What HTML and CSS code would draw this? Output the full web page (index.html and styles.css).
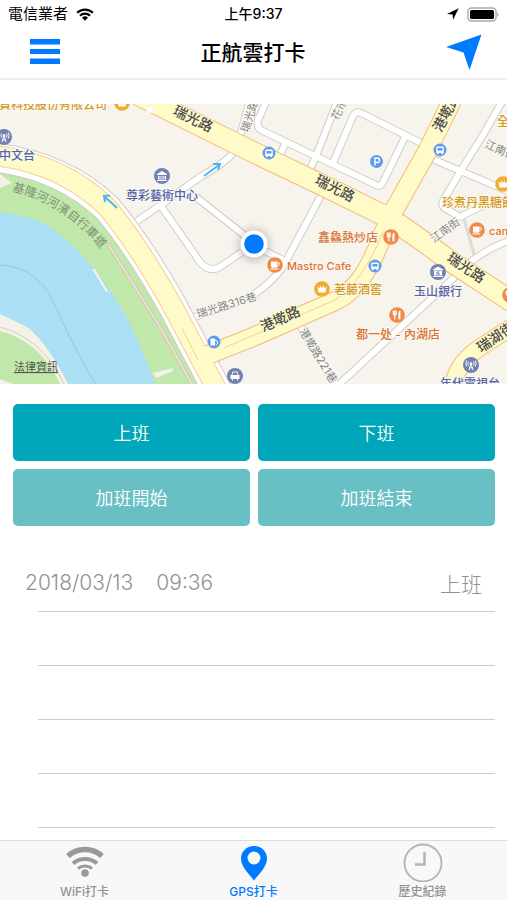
FILE: index.html
```html
<!DOCTYPE html>
<html lang="zh-Hant">
<head>
<meta charset="utf-8">
<meta name="viewport" content="width=device-width, initial-scale=1">
<title>正航雲打卡</title>
<link rel="stylesheet" href="styles.css">
</head>
<body>
<div class="status">
  <div class="status-left">
    <span>電信業者</span>
    <svg width="18" height="13" viewBox="0 0 18 13" aria-hidden="true">
      <g fill="none" stroke="#000" stroke-width="2.3">
        <path d="M1.2 4.8a11 11 0 0 1 15.6 0"/>
        <path d="M4 7.8a7 7 0 0 1 10 0"/>
      </g>
      <path d="M9 12.8 6 9.8a4.3 4.3 0 0 1 6 0z"/>
    </svg>
  </div>
  <div class="status-time">上午9:37</div>
  <div class="status-right">
    <svg width="12" height="12" viewBox="0 0 12 12" aria-hidden="true"><path d="M11.7.3 0 6l5.6.5.5 5.3z"/></svg>
    <svg width="32" height="15" viewBox="0 0 32 15" aria-hidden="true">
      <rect x="1" y="1" width="28" height="13" rx="3.5" fill="#fff" stroke="#aaa" stroke-width="1.4"/>
      <rect x="3" y="3" width="24" height="9" rx="1.5"/>
      <path d="M30.3 5.2c1.6.8 1.6 3.8 0 4.6z" fill="#999"/>
    </svg>
  </div>
</div>
<header class="nav">
  <button class="icon-button" type="button" aria-label="選單">
    <svg width="30" height="26" viewBox="0 0 30 26"><path fill="#007aff" d="M0 0h30v5.500H0zM0 10h30v5H0zM0 19.500h30V25H0z"/></svg>
  </button>
  <h1>正航雲打卡</h1>
  <button class="icon-button" type="button" aria-label="定位">
    <svg width="36" height="36" viewBox="0 0 36 36"><path fill="#007aff" d="M35.500.500 0 13l17.500 5.500L23.500 36z"/></svg>
  </button>
</header>
<main>
<svg class="map" viewBox="0 104 507 280" role="img" aria-label="地圖">
  <defs>
    <path id="trail" d="M12 191Q64 203 102 250"/>
    <g id="bus"><circle r="6.500" fill="#5f9cee"/><path fill="#fff" d="M-3-3.500h6l.8 1V3H-3.800v-5.500zM-3 3h1.600v1.300H-3zM1.400 3H3v1.300H1.400z"/><path fill="#5f9cee" d="M-2.500-2h5V.6h-5z"/></g>
    <g id="cup"><circle r="7.800" fill="#f08a4b"/><path fill="#fff" d="M-4-3.500h6.500v4.700q0 1.500-1.500 1.500h-3.500q-1.500 0-1.500-1.500zM-4.500 3.500h8v1h-8z"/><path fill="none" stroke="#fff" d="M2.500-2.500q2.600 0 2 1.700T2.500.8"/></g>
    <g id="food"><circle r="7.800" fill="#f08a4b"/><g fill="none" stroke="#fff" stroke-width="1.200"><path d="M-3.600-4.500V-1q0 1 1.400 1T-.800-1v-3.500M-2.200-4.500v9"/></g><path fill="#fff" d="M1.400 4.500V-2q0-2.500 2-2.500v9H2.600V1.200L2.400 4.500z"/></g>
    <g id="crown"><circle r="7.800" fill="#f1ac32"/><path fill="#fff" d="M-4.500-2.500-2.500-.500-1.500-3.500 0-.800l1.500-2.700 1 3 2-2-1 6h-7z"/></g>
    <g id="tower"><circle r="8" fill="#7480b3"/><g fill="none" stroke="#fff"><path d="M-2.500-3.500a4 4 0 0 0 0 4M2.500-3.500a4 4 0 0 1 0 4M-4.300-4.500a6 6 0 0 0 0 6M4.300-4.500a6 6 0 0 1 0 6M-2 5 0-1.500 2 5M-1.500 2.800h3"/></g><circle cy="-1.500" r="1.300" fill="#fff"/></g>
    <g id="bank"><circle r="8" fill="#7480b3"/><path fill="#fff" d="M0-5 5-2v1H-5v-1zM-4 0h8v3.500H-4zM-5 4H5v1H-5z"/><path stroke="#7480b3" d="M-2 0v3.500M0 0v3.500M2 0v3.500"/></g>
    <g id="streets">
      <path d="M250 100 239 140"/>
      <path d="M269 96 258 120q-2 8 5 11l113 54q5 2 7-3l22-45"/>
      <path d="M286 142l-8 17M341 92l-25 64-9 20M333 163 353 116q3-5 8-3l62 31"/>
      <path d="M430 158l80 34M510 88 483 135 460 172 443 201q-2 5 3 8l14 8 24-12M520 238q-24 5-47 22L333 390"/>
      <path d="M237 147q-6 13-37 30l-38 27-35 24M196 197l48 38M263 250l20 10M161 206l39 56q9 11 20 5l22-15"/>
      <path d="M324 190 286 261q-8 17-33 34-20 10-65 24M298 322l37 62"/>
    </g>
    <filter id="glow" x="-50%" y="-50%" width="200%" height="200%"><feGaussianBlur stdDeviation="4"/></filter>
  </defs>

  <rect y="104" width="507" height="280" fill="#f7f4ee"/>

  <!-- river and parks -->
  <path fill="#bfe8aa" d="M0 170Q50 178 90 208Q110 230 155 300Q180 340 208 384H0z"/>
  <path fill="#aadff4" d="M0 213Q42 215 66 240Q96 266 122 309Q142 346 155 384H0z"/>
  <path fill="none" stroke="#8ccbe6" d="M0 265Q36 267 52 299Q72 345 96 385"/>
  <path fill="#f4f1e8" d="M0 314 29 328Q52 350 68 384H0z"/>
  <path fill="#bfe8aa" d="M0 331Q40 341 60 384H0z"/>
  <path fill="none" stroke="#d4cdbb" d="M0 327Q42 338 64 384"/>
  <path fill="#f4f1e8" d="m92 269 3 0 13 22-2 1zM153 373l20-5v3l-17 7zM0 379l13 5H0zM0 174l12 9-12 5z"/>
  <g fill="none">
    <path stroke="#cdc8b2" stroke-width="4" d="M108 244 160 327 194 388"/>
    <path stroke="#e9e3cd" stroke-width="2" d="M108 244 160 327 194 388"/>
  </g>

  <!-- side streets -->
  <path fill="none" stroke="#dedbd4" stroke-width="3" d="M464 219l11 38"/>
  <use href="#streets" fill="none" stroke="#d0cdc7" stroke-width="8" stroke-linejoin="round"/>
  <use href="#streets" fill="none" stroke="#fff" stroke-width="6" stroke-linejoin="round"/>

  <!-- main roads -->
  <g fill="none" stroke-linejoin="round">
    <path stroke="#cfccc5" stroke-width="30" d="M-8 157Q62 165 107 208Q137 243 172 305L218 392"/>
    <path stroke="#fff" stroke-width="28" d="M-8 157Q62 165 107 208Q137 243 172 305L218 392"/>
    <path stroke="#f8cd92" stroke-width="21" d="M-8 155Q62 163 107 207Q137 243 172 305L218 392"/>
    <g stroke="#f5b977">
      <path stroke-width="22" d="M138 95 253 152 320 184 385 216Q400 224 450 261L520 307"/>
      <path stroke-width="20" d="M458 88 428 150 393 212 382 236Q364 288 335 301L253 337 200 358"/>
      <path stroke-width="18" d="M452 396Q452 364 484 345L515 325"/>
    </g>
    <path stroke="#fffbc8" stroke-width="19" d="M-8 155Q62 163 107 207Q137 243 172 305L218 392"/>
    <g stroke="#fffbc8">
      <path stroke-width="20" d="M138 95 253 152 320 184 385 216Q400 224 450 261L520 307"/>
      <path stroke-width="18" d="M458 88 428 150 393 212 382 236Q364 288 335 301L253 337 200 358"/>
      <path stroke-width="16" d="M452 396Q452 364 484 345L515 325"/>
    </g>
    <path stroke="#f7cf8b" d="M224 348 333 301Q362 284 383 232M182 328l16 32"/>
  </g>
  <circle cx="150" cy="110" r="3" fill="#fff"/>
  <g fill="none" stroke="#4ab4f5" stroke-width="2"><path d="m117 208-12-11M110 195.500l-6 .500 1 6M204 176l15-11M213 164l7 0-2 6"/></g>

  <!-- road names -->
  <g class="road">
    <text transform="translate(172 114) rotate(26)">瑞光路</text>
    <text transform="translate(314 183) rotate(27)">瑞光路</text>
    <text transform="translate(446 260) rotate(34)">瑞光路</text>
    <text transform="translate(441 133) rotate(-62)">港墘路</text>
    <text transform="translate(263 332) rotate(-24)">港墘路</text>
    <text transform="translate(481 353) rotate(-34)">瑞湖街</text>
  </g>
  <g class="lane">
    <text transform="translate(248 133) rotate(-72)">瑞光路</text>
    <text transform="translate(338 121) rotate(-64)">花市街</text>
    <text transform="translate(484 147) rotate(24)">江南街</text>
    <text transform="translate(434 243) rotate(-36)">江南街</text>
    <text transform="translate(198 318) rotate(-17)">瑞光路316巷</text>
    <text transform="translate(299 331) rotate(59)">港墘路221巷</text>
    <text class="trail"><textPath href="#trail">基隆河河濱自行車道</textPath></text>
  </g>

  <!-- places -->
  <use href="#bus" x="269" y="153"/><use href="#bus" x="440" y="150"/><use href="#bus" x="375" y="266"/>
  <g transform="translate(376.500 161.500)"><circle r="6.500" fill="#5f9cee"/><path fill="none" stroke="#fff" stroke-width="1.500" d="M-1.500 4v-7.500H.700q2.300 0 2.300 2.300T.700 1h-2.200"/></g>
  <g transform="translate(214 342)"><circle r="6.500" fill="#5f9cee"/><path fill="#fff" d="M-3.500-3.500h4.500v7h-4.500z"/><path fill="none" stroke="#fff" d="m1-2 2.500 1.500V2q-1 1.500-2 0"/></g>
  <g transform="translate(235 376)"><circle r="8" fill="#7480b3"/><path fill="#fff" d="M-2.500-4.500h5l1 3.500h1v4h-1.500v1.500h-1V3h-4v1.500h-1V3h-1.500v-4h1z"/><path fill="#7480b3" d="M-2-3.500h4L2.500-1h-5z"/></g>
  <use href="#tower" x="4" y="137"/><use href="#tower" x="471" y="365"/>
  <use href="#bank" x="162" y="176"/>
  <g transform="translate(438 272)"><circle r="8" fill="#7480b3"/><path fill="#fff" d="M0-5.500 5-2.500v1H-5v-1zM-4-1h8v4.500H-4zM-5 4H5v1H-5z"/><path fill="none" stroke="#7480b3" d="M1.500 0H-.5q-1 0-1 .7t1 .7h1q1 0 1 .7t-1 .7h-2"/></g>
  <use href="#cup" x="275" y="265"/><use href="#cup" x="477" y="230"/>
  <use href="#food" x="391" y="237"/><use href="#food" x="397" y="315"/><use href="#food" x="510" y="295"/>
  <use href="#crown" x="122" y="103"/><use href="#crown" x="322" y="289"/><use href="#crown" x="503" y="184"/>
  <g class="place blue">
    <text x="-1" y="160">中文台</text>
    <text x="126" y="200">尊彩藝術中心</text>
    <text x="414" y="296">玉山銀行</text>
    <text x="440" y="388">年代電視台</text>
  </g>
  <g class="place gold">
    <text x="-1" y="109">資科技股份有限公司</text>
    <text x="497" y="126">全家</text>
    <text x="442" y="207">珍煮丹黑糖飲品</text>
    <text x="334" y="294">荖藤酒窖</text>
  </g>
  <g class="place orange">
    <text x="318" y="242">鑫鱻熱炒店</text>
    <text x="287" y="270" class="latin">Mastro Cafe</text>
    <text x="489" y="235" class="latin">cama</text>
    <text x="356" y="339">都一处 - 內湖店</text>
  </g>
  <text class="legal" x="14" y="371">法律資訊</text>

  <circle cx="254" cy="245" r="16" fill="#000" opacity=".2" filter="url(#glow)"/>
  <circle cx="254" cy="244" r="13.500" fill="#fff"/>
  <circle cx="254" cy="244" r="9.800" fill="#007aff"/>
</svg>

<div class="actions">
  <button type="button">上班</button>
  <button type="button">下班</button>
  <button type="button" class="overtime">加班開始</button>
  <button type="button" class="overtime">加班結束</button>
</div>

<ul class="records">
  <li><span class="date">2018/03/13</span><span class="time">09:36</span><span class="kind">上班</span></li>
  <li></li>
  <li></li>
  <li></li>
  <li></li>
</ul>
</main>
<nav class="tabs">
  <a href="#wifi">
    <svg width="40" height="40" viewBox="0 0 40 40" aria-hidden="true">
      <g fill="none" stroke="#999">
        <path stroke-width="5.500" d="M3 14a25.500 25.500 0 0 1 34 0"/>
        <path stroke-width="4" d="M8 21.500a18 18 0 0 1 24 0"/>
        <path stroke-width="3" d="M13 26.500a11 11 0 0 1 14 0"/>
      </g>
      <circle cx="20" cy="31" r="3.800" fill="#999"/>
    </svg>
    <span>WiFi打卡</span>
  </a>
  <a href="#gps" class="active" aria-current="page">
    <svg width="40" height="40" viewBox="0 0 40 40" aria-hidden="true"><path fill="#007aff" fill-rule="evenodd" d="M20 4c7.500 0 13 5.500 13 12.500 0 8-7.500 15-13 22-5.500-7-13-14-13-22C7 9.500 12.500 4 20 4zM20 9.500a6.500 6.500 0 1 0 0 13 6.500 6.500 0 0 0 0-13z"/></svg>
    <span>GPS打卡</span>
  </a>
  <a href="#history">
    <svg width="40" height="40" viewBox="0 0 40 40" aria-hidden="true"><g fill="none" stroke="#b3b3b3"><circle cx="20" cy="21" r="18.500" stroke-width="1.800"/><path stroke-width="2.500" d="M21.500 10v12.500H12"/></g></svg>
    <span>歷史紀錄</span>
  </a>
</nav>
</body>
</html>
```
FILE: styles.css
```css
* { box-sizing: border-box; }

body {
  margin: 0;
  min-height: 100vh;
  display: flex;
  flex-direction: column;
  background: #fff;
  color: #000;
  font-family: Inter, "Noto Sans CJK TC", sans-serif;
}

svg { display: block; }

button {
  border: 0;
  padding: 0;
  font: inherit;
  cursor: pointer;
}

.status {
  display: grid;
  grid-template-columns: 1fr auto 1fr;
  align-items: center;
  height: 28px;
  padding: 0 8px;
  font-size: 15px;
  line-height: 28px;
}

.status-left,
.status-right {
  display: flex;
  align-items: center;
  gap: 8px;
}

.status-right { justify-content: flex-end; }

.status-time { font-size: 14px; font-weight: 500; }

.nav {
  display: flex;
  align-items: center;
  justify-content: space-between;
  height: 52px;
  padding: 2px 25px 4px 30px;
  border-bottom: 2px solid #ececec;
}

.icon-button { background: none; }

h1 {
  margin: 0;
  padding-top: 2px;
  font-size: 21px;
  line-height: 28px;
  font-weight: 500;
}

main { flex: 1; }

.map {
  width: 100%;
  height: auto;
  margin-top: 24px;
}

.map text { paint-order: stroke; stroke: #fbf9f2; stroke-width: 2px; stroke-linejoin: round; }
.map .road { font-size: 14px; font-weight: 500; fill: #4d4d4d; }
.map .road text { stroke: #fffbc8; }
.lane { font-size: 11px; fill: #858585; }
.place { font-size: 12px; font-weight: 500; }
.latin { font-size: 11px; }
.blue { fill: #5263a6; }
.gold { fill: #d39a1c; }
.orange { fill: #d97436; }
.map .legal { font-size: 11px; fill: #555; text-decoration: underline; stroke: none; }
.map .trail { font-size: 12px; stroke: none; fill: #7f8f74; }

.actions {
  display: grid;
  grid-template-columns: 1fr 1fr;
  gap: 8px;
  padding: 20px 12px 0 13px;
}

.actions button {
  height: 57px;
  padding-bottom: 2px;
  border-radius: 5px;
  background: #00a6b9;
  color: #fff;
  font-size: 18px;
  font-weight: 350;
}

.actions .overtime { background: #69c0c4; }

.records {
  margin: 32px 12px 0 38px;
  padding: 0;
  list-style: none;
}

.records li {
  display: flex;
  align-items: center;
  height: 54px;
  padding-bottom: 4px;
  border-bottom: 1px solid #ccc;
  color: #929292;
  font-size: 21px;
  font-weight: 300;
}

.date { margin-left: -13px; }
.time { margin-left: 23px; }
.kind { margin: 0 13px 0 auto; }

.tabs {
  display: grid;
  grid-template-columns: 1fr 1fr 1fr;
  height: 60px;
  border-top: 1px solid #dcdcdc;
  background: #f8f8f8;
}

.tabs a {
  display: flex;
  flex-direction: column;
  align-items: center;
  padding-top: 1px;
  color: #929292;
  font-size: 12px;
  line-height: 19px;
  font-weight: 500;
  text-decoration: none;
}

.tabs .active { color: #007aff; }
```
